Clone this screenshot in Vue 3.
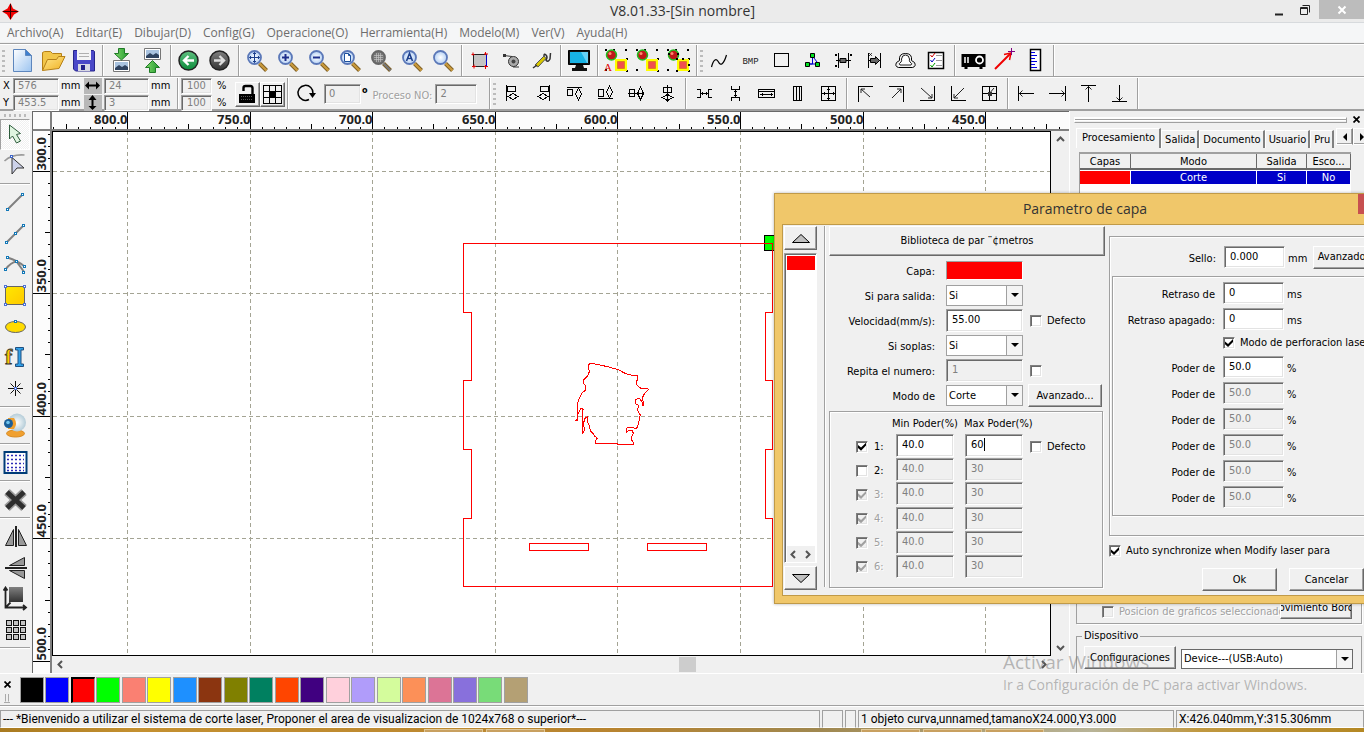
<script setup>
import { ref, computed, onMounted, onUnmounted } from 'vue'

const menus = ['Archivo(A)', 'Editar(E)', 'Dibujar(D)', 'Config(G)', 'Operacione(O)', 'Herramienta(H)', 'Modelo(M)', 'Ver(V)', 'Ayuda(H)']

const lens = (inner, fill = 'url(#glass)', rim = '#5b78b8', handle = '#c99a3c') =>
  `<path d="M14.5 15.5l7 7" stroke="#7a5a20" stroke-width="4"/><path d="M14.5 15.5l7 7" stroke="${handle}" stroke-width="2.4"/><circle cx="9.500" cy="9.500" r="6.500" fill="${fill}" stroke="${rim}" stroke-width="1.800"/>${inner}`
const pic = (y) =>
  `<path d="M4.500 ${y}.500h16v11h-16z" fill="#fff" stroke="#777"/><path d="M6 ${y + 2}h13v8H6z" fill="#a9c3e0"/><path d="M6 ${y + 8}l4-3 3 2 3-2 3 2v3H6z" fill="#2f4360"/>`
const spots = (extra, mode) =>
  `<g fill="#000"><path d="M1 1h2v2H1zM9 1h2v2H9zM21 1h2v2h-2zM1 21h2v2H1zM22 10h2v2h-2zM22 22h2v2h-2z"/></g><circle cx="7.500" cy="7" r="5" fill="#c01818" stroke="#20c020" stroke-width="1.500"/><circle cx="6" cy="5.500" r="1.500" fill="#ff8a70"/><path d="M11 11h12v12H11z" fill="#ff0"/><path d="M13.500 13.500h7v7h-7z" fill="#f05050" stroke="#e08020"/>${mode ? '<path d="M2 5h2v2H2zM11 5h2v2h-2zM10 10h2v2h-2zM22 16h2v2h-2zM16 10h2v2h-2zM10 22h2v2h-2z"/>' : ''}${extra}`
const line = (d, extra = '') => `<g fill="none" stroke="#000" shape-rendering="crispEdges"><path d="${d}"/>${extra}</g>`
const diag = (d) => `<path d="${d}" fill="none" stroke="#222"/>`
const node = (x, y, c = '#1278b8') => `<rect x="${x - 1}.500" y="${y - 1}.500" width="2" height="2" fill="#fff" stroke="${c}"/>`

const icons = {
  nuevo: '<path d="M3.500 1.500h12l6 6v16h-18z" fill="url(#sheet)" stroke="#5d86bd"/><path d="M15.500 1.500v6h6z" fill="#3c7fd0" stroke="#5d86bd"/>',
  abrir: '<path d="M1.500 22.500v-18l2-1h6l2 2h9v5" fill="#f2c64a" stroke="#b58018"/><path d="M1.500 22.500l5-11h9l2-3h6.500l-6 12z" fill="url(#gold)" stroke="#b58018"/>',
  guardar: '<path d="M1.500 2.500h20l1 1v19.500h-19l-2-2z" fill="#4a48c8" stroke="#26258c"/><path d="M5 2h14v10H5z" fill="#f4f4f4"/><path d="M7 5.500h10M7 8.500h10" stroke="#b0b0b0"/><path d="M6 16h12v7H6z" fill="#d8d8e4"/><path d="M9 17h4v5H9z" fill="#22208a"/>',
  importar: pic(12) + '<path d="M9.500 .500h6v5h4l-7 6.500-7-6.500h4z" fill="url(#leaf)" stroke="#1f7a26"/>',
  exportar: pic(0) + '<path d="M9.500 24.500h6v-5h4l-7-7-7 7h4z" fill="url(#leaf)" stroke="#1f7a26"/>',
  atras: '<circle cx="11.500" cy="12.500" r="9.500" fill="url(#green)" stroke="#222" stroke-width="1.500"/><path d="M17 12.500H7M11.500 8L7 12.500l4.500 4.500" fill="none" stroke="#fff" stroke-width="2.400"/>',
  delante: '<circle cx="11.500" cy="12.500" r="9.500" fill="url(#dark)" stroke="#222" stroke-width="1.500"/><path d="M6 12.500h10M11.500 8l4.500 4.500-4.500 4.500" fill="none" stroke="#ddd" stroke-width="2.400"/>',
  zmover: lens('<path d="M9.500 4.500v10M4.500 9.500h10M8 6l1.500-1.500L11 6M8 13l1.500 1.500L11 13M6 8L4.500 9.500 6 11M13 8l1.500 1.500L13 11" fill="none" stroke="#1c3f8c"/>'),
  zmas: lens('<path d="M9.500 6v7M6 9.500h7" stroke="#1c2f8c" stroke-width="2"/>'),
  zmenos: lens('<path d="M6 9.500h7" stroke="#1c2f8c" stroke-width="2"/>'),
  zpagina: lens('<path d="M6.500 5.500h4l2 2v6h-6zM10.500 5.500v2h2" fill="#fff" stroke="#1c4f9c"/>'),
  ztodo: lens('<path d="M5 7.500h9M5 9.500h9M5 11.500h9M7.500 5v9M9.500 5v9M11.500 5v9" stroke="#ccc" stroke-width=".6"/>', '#777', '#666', '#777'),
  zsel: lens('<path d="M6.500 13l3-7.500 3 7.500M7.500 10.500h4" fill="none" stroke="#1c3f8c" stroke-width="1.600"/>'),
  zver: lens(''),
  marco: '<path d="M5.500 6.500h13v12h-13z" fill="#c4c4c4" stroke="#222"/><path d="M18.500 6.500v12" stroke="#00c"/><path d="M5 4.500v3M3.500 6.500h3M17.500 4v3M16 6h4M6 16.500v4M4 18.500h4M17.500 17v4M16 18.500h4" stroke="#e00000"/>',
  rueda: '<circle cx="14.500" cy="13.500" r="5" fill="#aaa" stroke="#333"/><circle cx="14.500" cy="13.500" r="2" fill="#444"/><path d="M5 7.500l8 1M14 19h6" stroke="#333"/><path d="M4 6h3v3H4z" fill="#333"/>',
  pluma: '<path d="M5 17l9-9 2 2.500-8 8.500z" fill="#d8c800" stroke="#555"/><path d="M3 20l4-3M14 8q0-3 2-1t0 5q2 3 4-1l.500-6" fill="none" stroke="#333" stroke-width="1.500"/>',
  monitor: '<path d="M1.500 2.500h21v14h-21z" fill="#111" stroke="#000"/><path d="M3 4h18v11H3z" fill="#17b2e4"/><path d="M14 4h7v11h-1z" fill="#64d0f4"/><path d="M9 17h7l1 3h3v3H5v-3h3z" fill="#111"/>',
  selA: spots('<text x="0" y="23" font-family="Liberation Serif" font-size="11" fill="#e00000">A</text>', false),
  selB: spots('', false),
  selC: spots('', true),
  curva: '<path d="M4.500 19c2-8 5-9 7-5s5 3 8-7" fill="none" stroke="#000" stroke-width="1.200"/>',
  bmp: '<text x="12.500" y="16" text-anchor="middle" font-family="Liberation Mono" font-size="9" fill="#222">BMP</text>',
  cuadro: line('M5.500 5.500h14v13h-14z'),
  nodos: '<path d="M12.500 8v8h-6M12.500 8l6 8h-12" fill="none" stroke="#0000d0"/><g fill="#00e020" stroke="#000"><path d="M10.500 5.500h4v4h-4zM5.500 14.500h4v4h-4zM15.500 14.500h4v4h-4z"/></g>',
  punto1: line('M7.500 5v15M17.500 5v15M5 12.500h15') + '<path d="M9 10.500h6v4H9z" fill="#666" stroke="#000"/><path d="M4 6h2v2H4zM4 17h2v2H4zM19 6h2v2h-2z"/>',
  punto2: line('M6.500 5v15M18.500 5v15M6 12.500h12') + '<path d="M8.500 10.500h5v-2l4 4-4 4v-2h-5z" fill="#666" stroke="#000"/><path d="M7 5l3 3M10 5L7 8" stroke="#000" stroke-width=".7"/>',
  nube: '<path d="M5.500 19.500q-4-1-2-5l3-2q-1-7 6-7t6 7l3 2q2 4-2 5z" fill="none" stroke="#000"/><path d="M7 17q-2-1 1-3 1-1 .500-3 .500-4 4-4t4 4q-.500 2 .500 3 3 2 1 3z" fill="#fff" stroke="#222"/>',
  lista: '<path d="M4.500 4.500h15v16h-15z" fill="#fff" stroke="#000" stroke-width="1.500"/><path d="M6.500 7l1.500 2 3-4" stroke="#d00000" fill="none"/><path d="M6.500 12l1.500 2 3-4" stroke="#0000c0" fill="none"/><path d="M6.500 17l1.500 2 3-4" stroke="#00a000" fill="none"/><path d="M12 7.500h6M12 12.500h6M12 17.500h6" stroke="#999"/>',
  proyector: '<path d="M.500 6h24v13h-3v2h-3v-2h-12v2h-3v-2h-3z"/><path d="M4 9v6M7 9v6" stroke="#fff" stroke-width="1.500"/><circle cx="18.500" cy="12" r="3.500" fill="none" stroke="#fff" stroke-width="1.800"/>',
  flecha: '<path d="M3 21L18 6" stroke="#f00000" stroke-width="2"/><path d="M12 6.500l7-1.500-1.500 7" fill="none" stroke="#f00000" stroke-width="1.500"/><path d="M19.500 0v7M16 3.500h7" stroke="#800080"/>',
  regla: '<path d="M7.500 1.500h10v21h-10z" fill="#fff" stroke="#000" stroke-width="1.500"/><path d="M8 4.500h4M8 7.500h6M8 10.500h4M8 13.500h6M8 16.500h4M8 19.500h6" stroke="#0000e0" stroke-width="1.200"/>',
  alIzq: line('M6.500 4v16M7.500 5.500h8v5h-8zM8 15.500l5-3 5 3-5 3z'),
  alDer: line('M18.500 4v16M9.500 5.500h8v5h-8zM7 15.500l5-3 5 3-5 3z'),
  alSup: line('M5 6.500h15M5.500 8.500h5v6h-5zM16.500 7l3 6-3 6-3-6z'),
  alInf: line('M5 17.500h15M5.500 8.500h5v7h-5zM16.500 5l3 6-3 6-3-6z'),
  alMedH: line('M4 12.500h16M5.500 8.500h5v7h-5zM16.500 6l3 6.500-3 6-3-6z'),
  alMedV: line('M12.500 4v17M8.500 6.500h8v5h-8zM7 16.500l5.500-3 5.500 3-5.500 3z'),
  espH: line('M5 8.500h3.500v8H5M20 8.500h-3.500v8H20M9 12.500h8M10.500 11v3M14.500 11v3'),
  espV: line('M8.500 5v3.500h8V5M8.500 20v-3.500h8V20M12.500 9v8M11 10.500h3M11 14.500h3'),
  igAncho: line('M4.500 8.500h16v8h-16zM5 10.500h15M6 13.500h13M8 12v3M17 12v3'),
  igAlto: line('M8.500 5.500h8v14h-8zM11.500 6v13M14.500 6v13'),
  igTam: line('M5.500 5.500h14v14h-14zM12.500 5v15M5 12.500h15M11 8h3M11 17h3M8 11v3M17 11v3'),
  escTL: line('M5 5.500h15M5.500 5v16') + diag('M17 16L8 8M8 12V8h4'),
  escTR: line('M5 5.500h15M19.500 5v16') + diag('M8 17l9-9M13 8h4v4'),
  escBR: line('M5 19.500h15M19.500 5v15') + diag('M6 7l11 10M17 13v4h-4'),
  escBL: line('M5 19.500h15M5.500 5v15') + diag('M18 7L8 17M8 13v4h4'),
  escC: line('M5.500 5.500h14v14h-14zM12.500 5v15M5 12.500h15') + diag('M12 13l5-6') + '<path d="M11 11h4v4h-4z" fill="#333"/>',
  iIzq: line('M4.500 5v15M5 12.500h15') + diag('M8.500 9.500l-3 3 3 3'),
  iDer: line('M20.500 5v15M4 12.500h16') + diag('M16.500 9.500l3 3-3 3'),
  iSup: line('M5 4.500h15M12.500 5v16') + diag('M9.500 8.500l3-3 3 3'),
  iInf: line('M5 20.500h15M12.500 4v16') + diag('M9.500 16.500l3 3 3-3'),
  giro: '<path d="M15 18.500a7.500 7.500 0 1 1 4-6" fill="none" stroke="#000" stroke-width="1.500"/><path d="M15 12h7l-3.500 5z"/>',
  candado: '<path d="M17.500 12V6q0-2-2-2h-5q-2 0-2 2v3" fill="none" stroke="#000" stroke-width="2.400"/><path d="M4 12h16v9H4z"/><path d="M6 14.500h11M6 17.500h11" stroke="#555" stroke-dasharray="1 1"/>',
  rejilla: line('M3.500 3.500h18v18h-18zM9.500 3v18M15.500 3v18M3 9.500h18M3 15.500h18') + '<path d="M10 10h5v5h-5z"/>',
  ptr: '<path d="M6.500 3v14l3-3 4 7 4-2-4-6.500 4-1z" fill="#dff5e0" stroke="#2e5c3c"/>',
  editar: '<path d="M1.500 8Q9 1 21.500 2" fill="none" stroke="#999" stroke-width="1.600"/><path d="M9 4.500v16.500l5-6h7z" fill="#cdd2ea" stroke="#333"/>' + node(8, 3, '#3c64c8'),
  recta: '<path d="M4.500 19.500l15-15" stroke="#808080" stroke-width="2"/>' + node(4, 19) + node(19, 4),
  poli: '<path d="M3.500 21.500l17-17" stroke="#808080" stroke-width="2"/>' + node(3, 21) + node(12, 12) + node(20, 4),
  bezier: '<path d="M2.500 17.500q5-7 11-8l8 11M4.500 5.500q10 3 17 9" fill="none" stroke="#808080" stroke-width="2"/>' + node(4, 5) + node(13, 9) + node(21, 14) + node(20, 20) + node(2, 17),
  rect: '<path d="M2.500 3.500h19v18h-19z" fill="url(#amber)" stroke="#666"/>' + node(2, 3, '#4c70d8') + node(21, 3, '#4c70d8') + node(2, 21, '#4c70d8') + node(21, 21, '#4c70d8'),
  elipse: '<ellipse cx="12.500" cy="13" rx="10" ry="5.500" fill="#ffdc00" stroke="#666"/>' + node(12, 7, '#1278b8'),
  texto: '<text x="2" y="19" font-family="Liberation Serif" font-weight="bold" font-size="22" fill="#ffc800" stroke="#333" stroke-width=".8">f</text><path d="M12.500 2.500h8v2.500h-2.500v14h2.500v2.500h-8v-2.500h2.500v-14h-2.500z" fill="#30a0e8" stroke="#205080"/>',
  punto: '<path d="M12.500 5v15M5 12.500h15M7.500 7.500l10 10M17.500 7.500l-10 10" stroke="#111"/>' + node(12, 12, '#4c70d8'),
  camara: '<ellipse cx="12.500" cy="20.500" rx="9" ry="3.500" fill="#f0a030" stroke="#d88a20"/><circle cx="14" cy="9.500" r="9" fill="url(#ball)"/><path d="M5 5h6q4 5.500 0 11H5z" fill="#f0a030"/><circle cx="5.500" cy="10.500" r="4.500" fill="#1b5f98"/><circle cx="5" cy="9.500" r="1.800" fill="#6fc4ee"/>',
  puntos: '<path d="M1.500 2h22v21h-22z" fill="#fff" stroke="#003c78" stroke-width="2"/><g stroke="#2c2cb8" stroke-width="1.600" stroke-dasharray="2 2"><path d="M4 5.500h17M4 9.500h17M4 13.500h17M4 17.500h17M4 20.500h17"/></g>',
  cruz: '<path d="M4 5l17 16M21 5L4 21" stroke="#999" stroke-width="8"/><path d="M4 5l17 16M21 5L4 21" stroke="#2e2e2e" stroke-width="5"/>',
  espejoH: '<path d="M10.500 5.500v16h-8zM15.500 5.500v16h8z" fill="#999" stroke="#222"/><path d="M13 2v21" stroke="#222" stroke-width="2"/>',
  espejoV: '<path d="M21.500 10.500v-8l-15 8zM21.500 15.500v8l-15-8z" fill="#999" stroke="#222"/><path d="M2 13h22" stroke="#222" stroke-width="2"/>',
  origen: '<path d="M6 1h14v15H6z" fill="url(#dark)"/><path d="M2.500 2v19.500h20M.500 4.500l2-3 2 3M20 19l3 2.500-3 2.500M2.500 21.500l5-5" fill="none" stroke="#222" stroke-width="1.800"/>',
  matriz: '<g fill="#c4c4c4" stroke="#111" shape-rendering="crispEdges"><path d="M3.500 3.500h5v5h-5zM10.500 3.500h5v5h-5zM17.500 3.500h5v5h-5zM3.500 10.500h5v5h-5zM10.500 10.500h5v5h-5zM17.500 10.500h5v5h-5zM3.500 17.500h5v5h-5zM10.500 17.500h5v5h-5zM17.500 17.500h5v5h-5z"/></g>'
}

const mainTools = [
  { grip: true, items: ['nuevo', 'abrir', 'guardar'] },
  { items: ['importar', 'exportar'] },
  { items: ['atras', 'delante'] },
  { items: ['zmover', 'zmas', 'zmenos', 'zpagina', 'ztodo', 'zsel', 'zver'] },
  { items: ['marco', 'rueda', 'pluma'] },
  { items: ['monitor'] },
  { items: ['selA', 'selB', 'selC'] },
  { grip: true, items: ['curva', 'bmp', 'cuadro', 'nodos', 'punto1', 'punto2', 'nube', 'lista'] },
  { items: ['proyector', 'flecha', 'regla'] }
]
const alignTools = [
  { grip: true, items: ['alIzq', 'alDer', 'alSup', 'alInf', 'alMedH', 'alMedV'] },
  { items: ['espH', 'espV', 'igAncho', 'igAlto', 'igTam'] },
  { items: ['escTL', 'escTR', 'escBR', 'escBL', 'escC'] },
  { items: ['iIzq', 'iDer', 'iSup', 'iInf'] }
]
const sideTools = [
  ['ptr', 'editar'],
  ['recta', 'poli', 'bezier', 'rect', 'elipse', 'texto', 'punto'],
  ['camara'],
  ['puntos'],
  ['cruz'],
  ['espejoH', 'espejoV', 'origen', 'matriz']
]

// Rulers: ten divisions for every 50 mm, as far as the window shows them.
const STEP = 12.26
const size = ref({ w: window.innerWidth, h: window.innerHeight })
const measure = () => { size.value = { w: window.innerWidth, h: window.innerHeight } }
onMounted(() => window.addEventListener('resize', measure))
onUnmounted(() => window.removeEventListener('resize', measure))

const scale = (origin, first, end) => {
  const out = []
  for (let k = first; origin + k * STEP < end; k++) {
    out.push({ k, pos: Math.floor(origin + k * STEP) + 0.5, len: k % 10 === 0 ? 18 : k % 5 === 0 ? 6 : 3 })
  }
  return out
}
const majors = (list, label) => list.filter((t) => t.k >= 0 && t.k % 10 === 0).map((t) => ({ pos: t.pos, label: label(t.k * 5).toFixed(1) }))
const hTicks = computed(() => scale(127.4, -6, size.value.w - 296))
const vTicks = computed(() => scale(171, -3, size.value.h - 59))
const hMajors = computed(() => majors(hTicks.value, (d) => 800 - d))
const vMajors = computed(() => majors(vTicks.value, (d) => 300 + d))

const tabs = ['Procesamiento', 'Salida', 'Documento', 'Usuario', 'Pru']
const colors = ['#000000', '#0000ff', '#ff0000', '#00ff00', '#fa8072', '#ffff00', '#1e90ff', '#8b3510', '#808000', '#008060', '#ff4500', '#400080', '#ffd0dc', '#b09cfa', '#d4fc9c', '#fc9058', '#dc7496', '#8870dc', '#78dc78', '#b4a074']

const power = ref([
  { on: true, min: '40.0', max: '60', state: 'active' },
  { on: false, min: '40.0', max: '30', state: 'idle' },
  { on: true, min: '40.0', max: '30', state: 'off' },
  { on: true, min: '40.0', max: '30', state: 'off' },
  { on: true, min: '40.0', max: '30', state: 'off' },
  { on: true, min: '40.0', max: '30', state: 'off' }
])
const piercing = ref(['50.0', '50.0', '50.0', '50.0', '50.0', '50.0'])
</script>

<template>
  <div class="app">
    <svg class="defs" aria-hidden="true">
      <defs>
        <linearGradient id="sheet" x1="0" y1="0" x2="1" y2="1"><stop offset="0" stop-color="#fff" /><stop offset="1" stop-color="#9cc4f0" /></linearGradient>
        <linearGradient id="gold" x1="0" y1="0" x2="1" y2="1"><stop offset="0" stop-color="#ffe890" /><stop offset="1" stop-color="#f0b020" /></linearGradient>
        <linearGradient id="amber" x1="0" y1="0" x2="1" y2="1"><stop offset="0" stop-color="#ffe800" /><stop offset="1" stop-color="#ffc800" /></linearGradient>
        <linearGradient id="leaf" x1="0" y1="0" x2="1" y2="0"><stop offset="0" stop-color="#7ed868" /><stop offset="1" stop-color="#239a30" /></linearGradient>
        <linearGradient id="green" x1="0" y1="0" x2="0" y2="1"><stop offset="0" stop-color="#60c080" /><stop offset="1" stop-color="#0c8c3c" /></linearGradient>
        <linearGradient id="dark" x1="0" y1="0" x2="0" y2="1"><stop offset="0" stop-color="#808080" /><stop offset="1" stop-color="#333" /></linearGradient>
        <radialGradient id="glass"><stop offset="0" stop-color="#fff" /><stop offset="1" stop-color="#b4d0f4" /></radialGradient>
        <radialGradient id="ball"><stop offset="0" stop-color="#fff" /><stop offset="1" stop-color="#b4ccd8" /></radialGradient>
      </defs>
    </svg>

    <header class="title">
      <svg class="logo" width="17" height="17" viewBox="0 0 17 17"><path d="M8.500 0l2.500 5.500L17 8.500l-5 3-3.500 5.500-3.500-5.500-5-3 5.500-3z" fill="#f00000" /><path d="M8.500 1v15M1 8.500h15" stroke="#300" stroke-width="1" /></svg>
      <h1>V8.01.33-[Sin nombre]</h1>
      <div class="winbtns">
        <button aria-label="Minimizar"><svg width="12" height="14"><path d="M2 11.500h8" stroke="#222" stroke-width="2" /></svg></button>
        <button aria-label="Restaurar"><svg width="12" height="12" fill="none" stroke="#222"><path d="M1.500 3.500h7v7h-7zM1 4.500h8M3.500 1.500h7v7" /></svg></button>
        <button class="close" aria-label="Cerrar"><svg width="10" height="10"><path d="M1.500 1.500l7 7M8.500 1.500l-7 7" stroke="#fff" stroke-width="2" /></svg></button>
      </div>
    </header>

    <nav class="menu"><button v-for="m in menus" :key="m">{{ m }}</button></nav>

    <div class="bar">
      <div v-for="(g, i) in mainTools" :key="i" class="group">
        <i v-if="g.grip" class="grip"></i>
        <button v-for="n in g.items" :key="n" class="tool" :aria-label="n"><svg width="25" height="25" viewBox="0 0 25 25" v-html="icons[n]"></svg></button>
      </div>
    </div>

    <div class="bar second">
      <div class="group coords">
        <div class="xy">
          <label for="px">X</label><input id="px" value="576" /><span>mm</span>
          <button aria-label="Ancho"><svg width="17" height="15"><path d="M4 7.500h9" stroke="#000" stroke-width="2" /><path d="M1 7.500l4-4v8zM16 7.500l-4-4v8z" /></svg></button>
          <input aria-label="Ancho" value="24" /><span>mm</span>
          <label for="py">Y</label><input id="py" value="453.5" /><span>mm</span>
          <button aria-label="Alto"><svg width="17" height="15"><path d="M8.500 4v8" stroke="#000" stroke-width="2" /><path d="M8.500 0l4 5h-8zM8.500 15l4-4h-8z" /></svg></button>
          <input aria-label="Alto" value="3" /><span>mm</span>
        </div>
      </div>
      <div class="group scale">
        <div class="pct">
          <input aria-label="Escala X" value="100" /><span>%</span>
          <input aria-label="Escala Y" value="100" /><span>%</span>
        </div>
        <button class="raised sq" aria-label="Bloquear"><svg width="25" height="25" viewBox="0 0 25 25" v-html="icons.candado"></svg></button>
        <button class="raised sq" aria-label="Origen"><svg width="25" height="25" viewBox="0 0 25 25" v-html="icons.rejilla"></svg></button>
      </div>
      <div class="group rot">
        <svg width="25" height="25" viewBox="0 0 25 25" v-html="icons.giro"></svg>
        <input aria-label="Rotar" class="deg" value="0" /><span class="o">o</span>
        <label for="proc" class="etched">Proceso NO:</label><input id="proc" class="proc" value="2" />
      </div>
      <div v-for="(g, i) in alignTools" :key="i" class="group">
        <i v-if="g.grip" class="grip"></i>
        <button v-for="n in g.items" :key="n" class="tool" :aria-label="n"><svg width="25" height="25" viewBox="0 0 25 25" v-html="icons[n]"></svg></button>
      </div>
    </div>

    <main>
      <aside class="toolbox">
        <i class="hgrip"></i>
        <div v-for="(g, i) in sideTools" :key="i" class="stack">
          <button v-for="n in g" :key="n" class="tool" :class="{ picked: n === 'ptr' }" :aria-label="n"><svg width="25" height="25" viewBox="0 0 25 25" v-html="icons[n]"></svg></button>
        </div>
      </aside>

      <section class="work">
        <div class="corner"></div>
        <svg class="hruler" shape-rendering="crispEdges">
          <g transform="translate(-52 0)">
            <path v-for="t in hTicks" :key="t.pos" :d="`M${t.pos} ${18 - t.len}v${t.len}`" stroke="#000" />
            <text v-for="m in hMajors" :key="m.label" :x="m.pos" y="12" text-anchor="end">{{ m.label }}</text>
          </g>
        </svg>
        <svg class="vruler" shape-rendering="crispEdges">
          <g transform="translate(0 -131)">
            <path v-for="t in vTicks" :key="t.pos" :d="`M${18 - t.len} ${t.pos}h${t.len}`" stroke="#000" />
            <text v-for="m in vMajors" :key="m.label" :transform="`translate(13 ${m.pos - 1}) rotate(-90)`">{{ m.label }}</text>
          </g>
        </svg>
        <svg class="canvas" shape-rendering="crispEdges">
          <g transform="translate(-53 -132)">
            <g stroke="#a4a494" stroke-dasharray="4 3">
              <path v-for="m in hMajors" :key="m.label" :d="`M${m.pos} 131V1400`" />
              <path v-for="m in vMajors" :key="m.label" :d="`M53 ${m.pos}H2000`" />
            </g>
            <rect x="764.5" y="235.5" width="16" height="15" fill="#00ff00" stroke="#000" />
            <g fill="none" stroke="#ff0000">
              <path d="M463.500 243.500h309v69h-7v68h7v69h-7v69h7v68h-309v-68h8v-69h-8v-69h8v-68h-8z" />
              <path d="M529.500 543.500h59v7h-59zM647.500 543.500h59v7h-59z" />
              <path transform="translate(450 230) scale(.33333)" vector-effect="non-scaling-stroke" d="M420 401L436 402 455 406 480 412 505 419 525 430 545 436 563 437 563 449 560 453 560 464 572 475 590 475 596 479 585 488 579 500 579 514 582 528 577 528 577 517 570 507 564 505 558 508 556 521 565 525 563 542 571 555 567 572 563 590 557 596 550 593 534 592 529 595 529 607 536 602 547 602 550 610 545 620 545 630 552 640 550 643 503 643 503 640 437 640 437 633 442 624 434 619 430 611 421 602 418 587 412 575 412 560 405 565 401 578 403 602 398 609 397 540 401 540 399 536 392 536 388 543 383 555 382 571 379 571 382 568 382 525 386 508 397 488 405 482 407 469 401 460 401 449 412 439 418 425 415 405z" />
            </g>
          </g>
        </svg>
        <div class="vscroll">
          <svg width="9" height="6"><path d="M1 5l3.500-3.500L8 5" /></svg>
          <svg width="9" height="6"><path d="M1 1l3.500 3.500L8 1" /></svg>
        </div>
        <div class="hscroll">
          <svg width="6" height="9"><path d="M5 1L1.500 4.500 5 8" /></svg>
          <i></i>
          <svg width="6" height="9"><path d="M1 1l3.500 3.500L1 8" /></svg>
        </div>
      </section>

      <aside class="panel">
        <div class="handle"><i></i><button aria-label="Cerrar panel"><svg width="7" height="7"><path d="M.500 .500l6 6M6.500 .500l-6 6" stroke="#000" stroke-width="1.700" /></svg></button></div>
        <div class="tabs">
          <button v-for="(t, i) in tabs" :key="t" :class="{ on: i === 0 }">{{ t }}</button>
          <div class="arrows"><button class="raised" aria-label="Anterior"><svg width="5" height="8"><path d="M5 0v8L1 4z" /></svg></button><button class="raised" aria-label="Siguiente"><svg width="5" height="8"><path d="M1 0v8l4-4z" /></svg></button></div>
        </div>
        <div class="layers">
          <table>
            <thead><tr><th class="c1">Capas</th><th>Modo</th><th class="c3">Salida</th><th class="c4">Esco...</th></tr></thead>
            <tbody><tr><td class="red"></td><td>Corte</td><td>Si</td><td>No</td></tr></tbody>
          </table>
        </div>
        <div class="pos">
          <label class="etched"><input type="checkbox" disabled /><span>Posicion de graficos seleccionadc</span></label>
          <button class="raised">ovimiento Borc</button>
        </div>
        <fieldset>
          <legend>Dispositivo</legend>
          <button class="raised">Configuraciones</button>
          <div class="pick deep"><select aria-label="Dispositivo"><option>Device---(USB:Auto)</option></select></div>
        </fieldset>
      </aside>
    </main>

    <div class="palette">
      <div class="mini"><svg width="7" height="7"><path d="M.500 .500l6 6M6.500 .500l-6 6" stroke="#000" stroke-width="1.700" /></svg><svg width="7" height="9"><path d="M1.500 0v7.500M4.500 0v7.500M0 8.500h6" stroke="#aaa" /></svg></div>
      <div class="swatches"><button v-for="(c, i) in colors" :key="c" :class="{ on: i === 2 }" :style="{ background: c }" :aria-label="c"></button></div>
    </div>

    <footer class="status">
      <span class="grow">--- *Bienvenido a utilizar el sistema de corte laser, Proponer el area de visualizacion de 1024x768 o superior*---</span>
      <span class="s20"></span><span class="s10"></span>
      <span class="obj">1 objeto curva,unnamed,tamanoX24.000,Y3.000</span>
      <span class="cur">X:426.040mm,Y:315.306mm</span>
    </footer>
    <div class="taskbar"><i></i><i></i><b></b><i></i><i></i><i></i></div>

    <div class="watermark"><p class="big">Activar Windows</p><p>Ir a Configuración de PC para activar Windows.</p></div>

    <div class="dialog" role="dialog" aria-labelledby="dlg">
      <div class="dtitle"><h2 id="dlg">Parametro de capa</h2><button aria-label="Cerrar"></button></div>
      <div class="dbody">
        <div class="layerlist">
          <button class="raised" aria-label="Subir"><svg width="20" height="11"><path d="M1.500 9.500h17L10 1.500z" fill="#c0c0c0" stroke="#000" /></svg></button>
          <div class="list"><i></i><div><svg width="6" height="9"><path d="M5 1L1.500 4.500 5 8" /></svg><svg width="6" height="9"><path d="M1 1l3.500 3.500L1 8" /></svg></div></div>
          <button class="raised" aria-label="Bajar"><svg width="20" height="11"><path d="M1.500 1.500h17L10 9.500z" fill="#c0c0c0" stroke="#000" /></svg></button>
        </div>

        <div class="mid">
          <button class="raised lib">Biblioteca de par ¨¢metros</button>
          <div class="form">
            <label for="capa">Capa:</label><button id="capa" class="capa" aria-label="Capa"></button><span></span>
            <label for="sal">Si para salida:</label><div class="pick"><select id="sal"><option>Si</option></select></div><span></span>
            <label for="vel">Velocidad(mm/s):</label><input id="vel" class="field" value="55.00" /><label class="chk"><input type="checkbox" />Defecto</label>
            <label for="sop">Si soplas:</label><div class="pick"><select id="sop"><option>Si</option></select></div><span></span>
            <label for="rep">Repita el numero:</label><input id="rep" class="field" value="1" disabled /><label class="chk"><input type="checkbox" aria-label="Repetir" /></label>
            <label for="mod">Modo de</label><div class="pick"><select id="mod"><option>Corte</option></select></div><button class="raised adv">Avanzado...</button>
          </div>
          <div class="etch power">
            <div class="phead"><span>Min Poder(%)</span><span>Max Poder(%)</span></div>
            <div v-for="(p, i) in power" :key="i" class="prow">
              <label :class="{ etched: p.state === 'off' }"><input v-model="p.on" type="checkbox" :disabled="p.state === 'off'" />{{ i + 1 }}:</label>
              <input v-model="p.min" class="field" :aria-label="`Min ${i + 1}`" :disabled="p.state !== 'active'" />
              <div class="max"><input v-model="p.max" class="field" :aria-label="`Max ${i + 1}`" :disabled="p.state !== 'active'" /><i v-if="i === 0"></i></div>
              <label v-if="i === 0" class="chk"><input type="checkbox" />Defecto</label>
            </div>
          </div>
        </div>

        <div class="right">
          <div class="etch outer">
            <div class="row seal"><label for="sello">Sello:</label><input id="sello" class="field" value="0.000" /><span>mm</span><button class="raised">Avanzado...</button></div>
            <div class="etch inner">
              <div class="row"><label for="r1">Retraso de</label><input id="r1" class="field" value="0" /><span>ms</span></div>
              <div class="row"><label for="r2">Retraso apagado:</label><input id="r2" class="field" value="0" /><span>ms</span></div>
              <label class="perf"><input type="checkbox" checked />Modo de perforacion lase</label>
              <div v-for="(p, i) in piercing" :key="i" class="row"><label :for="`pd${i}`">Poder de</label><input :id="`pd${i}`" class="field" :value="p" :disabled="i > 0" /><span>%</span></div>
            </div>
          </div>
          <label class="sync"><input type="checkbox" checked />Auto synchronize when Modify laser para</label>
          <div class="actions"><button class="raised">Ok</button><button class="raised">Cancelar</button></div>
        </div>
      </div>
    </div>
  </div>
</template>

<style>
body { margin: 0; }
</style>

<style scoped>
* { box-sizing: border-box; }
.app { --ui: "DejaVu Sans Condensed", "Open Sans", sans-serif; --seg: "Open Sans", "Noto Sans", sans-serif; position: relative; display: flex; flex-direction: column; height: 100vh; overflow: hidden; background: #f0f0f0; color: #000; font: 11px/14px var(--ui); }
button, input, select { font: inherit; color: inherit; margin: 0; padding: 0; border-radius: 0; }
button { border: 0; background: none; }
p, h1, h2 { margin: 0; font-weight: normal; }
svg { flex: none; display: block; }
.defs { position: absolute; width: 0; height: 0; }

.raised { background: #f0f0f0; border: 1px solid; border-color: #fff #696969 #696969 #fff; box-shadow: inset -1px -1px #a0a0a0; display: flex; align-items: center; justify-content: center; white-space: nowrap; }
.etched, .etched input { color: #a0a0a0; text-shadow: 1px 1px #fff; }
.field, .xy input, .pct input, .rot input { background: #fff; border: 1px solid; border-color: #a0a0a0 #fff #fff #a0a0a0; box-shadow: inset 1px 1px #696969, inset -1px -1px #e3e3e3; min-width: 0; }
.field { height: 23px; padding: 0 5px 2px; }
.field:disabled { background: #f0f0f0; color: #808080; }

.title { flex: none; display: flex; align-items: center; height: 23px; background: #ebebeb; border-bottom: 1px solid #d7dadd; padding-left: 2px; }
.title h1 { flex: 1; text-align: center; font: 14px/22px var(--seg); color: #333; padding-left: 80px; }
.winbtns { display: flex; align-self: flex-start; height: 19px; }
.winbtns button { width: 26px; display: flex; align-items: center; justify-content: center; }
.winbtns .close { width: 45px; background: #bcbcbc; margin-left: 1px; }

.menu { flex: none; display: flex; gap: 12px; height: 20px; padding-left: 7px; background: #f5f6f7; border-bottom: 1px solid #efefef; }
.menu button { font: 12px/20px var(--seg); color: #6d6d6d; }

.bar { flex: none; display: flex; height: 33px; border-top: 1px solid #a0a0a0; box-shadow: inset 0 1px #fff; padding-top: 1px; }
.second { height: 35px; border-bottom: 2px solid #a0a0a0; }
.group { display: flex; align-items: center; padding: 0 2px; border-right: 1px solid #a0a0a0; box-shadow: 1px 0 #fff; margin-right: 1px; height: 31px; }
.tool { width: 31px; height: 31px; display: flex; align-items: center; justify-content: center; }
.grip { width: 3px; height: 22px; margin: 0 2px 0 0; background: repeating-linear-gradient(#bbb 0 2px, transparent 2px 5px); }
.bar .group + .group .grip { margin: 0 1px 0 0; }

.coords { width: 178px; padding: 1px 0 0 3px; }
.xy { display: grid; grid-template-columns: 10px 46px 25px 20px 45px 22px; grid-auto-rows: 16px; align-items: center; row-gap: 1px; }
.xy span { padding-left: 2px; }
.xy button { width: 18px; height: 16px; background: #b8b8b8; }
.xy input, .pct input { width: 100%; height: 16px; background: #f0f0f0; color: #808080; padding: 0 4px; }
.pct input { padding: 0 5px; }
.scale { width: 109px; padding-top: 1px; }
.pct { display: grid; grid-template-columns: 31px 23px; grid-auto-rows: 16px; row-gap: 1px; align-items: center; }
.pct span { padding-left: 5px; }
.sq { width: 25px; height: 25px; }
.rot { width: 201px; padding-left: 5px; }
.rot input { background: #f0f0f0; height: 20px; color: #808080; padding: 0 4px; }
.rot .deg { width: 37px; margin-left: 5px; }
.rot .proc { width: 42px; margin-left: 3px; }
.rot .o { font: bold 9px/12px var(--ui); margin: 0 5px 8px 1px; }
.rot .etched { padding-top: 4px; white-space: nowrap; }

main { flex: 1; min-height: 0; display: flex; }
.toolbox { width: 32px; flex: none; overflow: hidden; }
.hgrip { display: block; width: 23px; height: 3px; margin: 3px 4px 2px; background: repeating-linear-gradient(90deg, #bbb 0 2px, transparent 2px 5px); }
.stack { padding-bottom: 2px; border-bottom: 1px solid #a0a0a0; box-shadow: 0 1px #fff; margin: 0 2px 3px 0; }
.stack .tool { width: 30px; padding-left: 1px; }
.picked { background: repeating-conic-gradient(#fff 0 25%, #f0f0f0 0 50%) 0 0 / 2px 2px; border: 1px solid; border-color: #a0a0a0 #fff #fff #a0a0a0; }

.work { flex: 1; min-width: 0; display: grid; grid-template: 20px minmax(0, 1fr) 17px / 20px minmax(0, 1fr) 18px; }
.corner { background: #fcfcfc; border: 1px solid #696969; border-right: 2px solid #808080; border-bottom: 2px solid #808080; }
.hruler { grid-column: 2 / 4; width: 100%; height: 20px; background: #fcfcfc; border-top: 1px solid #696969; border-bottom: 2px solid #808080; }
.vruler { grid-row: 2 / 4; width: 20px; height: 100%; background: #fcfcfc; border-left: 1px solid #696969; border-right: 2px solid #808080; }
.hruler text, .vruler text { font: bold 13px "Noto Sans", sans-serif; fill: #222; }
.canvas { width: 100%; height: 100%; background: #fff; border: 1px solid #000; }
.vscroll { display: flex; flex-direction: column; justify-content: space-between; align-items: center; padding: 5px 0; }
.hscroll { grid-column: 2 / 4; display: flex; align-items: center; justify-content: space-between; padding: 0 22px 0 5px; }
.hscroll i { width: 17px; height: 15px; background: #cdcdcd; margin-left: 270px; }
.vscroll svg, .hscroll svg, .list svg { fill: none; stroke: #555; stroke-width: 2; }

.panel { width: 295px; flex: none; border-left: 1px solid #fff; display: flex; flex-direction: column; overflow: hidden; padding-left: 4px; }
.handle { flex: none; height: 17px; display: flex; align-items: center; }
.handle i { flex: 1; height: 6px; border: 1px solid; border-color: #fff #a0a0a0 #a0a0a0 #fff; background: linear-gradient(#fff 0 1px, #a0a0a0 1px 2px, #fff 2px 3px, #f0f0f0 3px); }
.handle button { margin: 0 4px 0 6px; }
.tabs { flex: none; display: flex; align-items: flex-end; height: 20px; margin-left: 2px; position: relative; }
.tabs button { border: solid; border-width: 1px 2px 0 1px; border-color: #fff #808080 #fff #fff; }
.tabs > button { height: 18px; padding: 0 2px 0 3px; }
.tabs > .on { height: 20px; padding: 0 4px 2px 5px; }
.arrows { position: absolute; right: -6px; top: 0; display: flex; }
.arrows button { width: 17px; height: 17px; background: #f0f0f0; border-width: 1px; }
.layers { flex: 1; min-height: 0; margin: 4px 13px 0 5px; background: #fff; border: 1px solid #a0a0a0; border-width: 2px 0 0 1px; }
table { width: 100%; border-spacing: 0; table-layout: fixed; line-height: 13px; }
th { font-weight: normal; height: 16px; padding: 0; background: #f0f0f0; border-right: 1px solid #696969; border-bottom: 2px solid #696969; white-space: nowrap; }
td { height: 14px; padding: 0; background: #0000c8; color: #fff; text-align: center; border: 1px solid #fff; border-width: 1px 1px 0 0; }
.red { background: #f00; }
.c1 { width: 51px; } .c3 { width: 50px; } .c4 { width: 44px; }
.pos { flex: none; display: flex; align-items: flex-end; height: 31px; margin: 0 2px 0 2px; border: 1px solid #a0a0a0; border-top: 0; box-shadow: 1px 1px #fff; padding: 0 9px 4px 25px; }
.pos label { display: flex; align-items: center; gap: 5px; width: 178px; overflow: hidden; white-space: nowrap; }
.pos button { width: 72px; height: 25px; padding-top: 3px; overflow: hidden; }
fieldset { flex: none; display: flex; gap: 5px; min-width: 0; height: 44px; margin: 5px 2px 0 2px; padding: 3px 8px 0 7px; border: 1px solid #a0a0a0; border-bottom: 0; }
legend { padding: 0 2px; margin-left: -2px; }
fieldset .raised { width: 92px; height: 23px; }

.pick { position: relative; background: #fff; border: 1px solid #a0a0a0; height: 21px; }
.pick::after { content: ""; position: absolute; right: 3px; top: 7px; border: solid transparent; border-width: 4px 4px 0; border-top-color: #000; pointer-events: none; }
.pick::before { content: ""; position: absolute; right: 0; top: 0; bottom: 0; width: 15px; background: #f4f4f4; border-left: 1px solid #a0a0a0; pointer-events: none; }
.pick select { position: relative; width: 100%; height: 100%; border: 0; background: none; appearance: none; padding-left: 2px; display: block; }
.deep { flex: 1; border-color: #696969; margin-top: 3px; height: 20px; }

input[type="checkbox"] { appearance: none; flex: none; width: 12px; height: 12px; background: #fff; border: 1px solid; border-color: #808080 #fff #fff #808080; box-shadow: inset 1px 1px #696969, inset -1px -1px #e3e3e3; }
input[type="checkbox"]:checked::after { content: ""; display: block; width: 8px; height: 8px; margin: 1px; background: #000; clip-path: polygon(0 30%, 38% 62%, 100% 0, 100% 36%, 38% 100%, 0 66%); }
input[type="checkbox"]:disabled { background: #f0f0f0; }
input[type="checkbox"]:disabled::after { background: #a0a0a0; }

.palette { flex: none; display: flex; height: 33px; border-top: 1px solid #fff; border-bottom: 1px solid #a0a0a0; padding: 3px 0 0 4px; }
.mini { width: 16px; display: flex; flex-direction: column; gap: 6px; padding-top: 4px; }
.swatches { display: flex; justify-content: space-between; width: 508px; }
.swatches button { width: 24px; height: 26px; border: 1px solid #a0a0a0; }
.swatches .on { border: solid; border-color: #000 #a0a0a0 #a0a0a0 #000; border-width: 2px 1px 1px 2px; }

.status { flex: none; display: flex; gap: 2px; height: 22px; padding-top: 3px; border-top: 1px solid #fff; font: 12px/14px Roboto, sans-serif; }
.status span { border: 1px solid #a0a0a0; border-bottom-color: #fff; padding-left: 2px; white-space: nowrap; overflow: hidden; line-height: 17px; }
.status .grow { flex: 1; min-width: 0; }
.s20 { width: 21px; } .s10 { width: 11px; } .obj { width: 316px; } .cur { width: 188px; }
.taskbar { flex: none; display: flex; gap: 3px; height: 4px; padding: 1px 0 0 424px; background: linear-gradient(90deg, #a87a20, #c49030 10%, #b88430 45%, #a08850 60%, #b8b498 80%, #c09840 88%, #b48824); }
.taskbar i { width: 59px; background: #c8a060; border: 1px solid #e0c898; border-bottom: 0; }
.taskbar b { width: 310px; }

.watermark { position: absolute; left: 1003px; bottom: 36px; color: rgba(120, 120, 120, .5); font: 14px/22px var(--seg); pointer-events: none; white-space: nowrap; }
.watermark .big { font-size: 19px; line-height: 24px; }

.dialog { position: absolute; left: 774px; top: 193px; width: 622px; height: 411px; background: #f0c76a; border: 1px solid #c09a48; padding: 0 7px 7px; display: flex; flex-direction: column; box-shadow: 0 0 3px rgba(0, 0, 0, .3); }
.dtitle { flex: none; height: 30px; position: relative; }
.dtitle h2 { text-align: center; font: 14px/30px var(--seg); color: #333; }
.dtitle button { position: absolute; right: 0; top: 0; width: 30px; height: 20px; background: #c75050; }
.dbody { flex: 1; min-height: 0; display: flex; background: #f0f0f0; border: 1px solid #c09a48; padding: 1px 0 0 1px; }
.layerlist { width: 33px; display: flex; flex-direction: column; gap: 3px; padding-bottom: 5px; }
.layerlist button { height: 24px; }
.list { flex: 1; background: #fff; border: 1px solid; border-color: #a0a0a0 #fff #fff #a0a0a0; box-shadow: inset 1px 1px #696969; padding: 2px 1px 0 2px; display: flex; flex-direction: column; justify-content: space-between; }
.list i { height: 14px; background: #f00; }
.list div { display: flex; justify-content: space-between; align-items: center; height: 16px; background: #f0f0f0; padding: 0 4px 0 3px; }
.mid { width: 281px; margin: 0 0 8px 7px; border-left: 1px solid #a0a0a0; box-shadow: inset 1px 0 #fff; padding-left: 4px; }
.lib { width: 276px; height: 30px; }
.form { display: grid; grid-template-columns: 106px 77px 1fr; column-gap: 11px; grid-auto-rows: 23px; row-gap: 2px; align-items: center; padding-top: 3px; }
.form > label:not(.chk) { text-align: right; padding-top: 2px; }
.form > .chk { margin-left: -4px; }
.form .adv { margin-left: -6px; }
.chk { display: flex; align-items: center; gap: 5px; }
.capa { height: 19px; background: #f00; border: 1px solid #a0a0a0; border-right-color: #fff; border-bottom-color: #fff; }
.adv { width: 74px; height: 23px; }
.etch { border: 1px solid #a0a0a0; box-shadow: 1px 1px #fff, inset 1px 1px #fff; }
.power { width: 274px; height: 177px; margin-top: 4px; padding: 5px 0 9px 26px; display: flex; flex-direction: column; justify-content: space-between; }
.phead { display: flex; gap: 6px; padding-left: 36px; margin-bottom: 2px; }
.prow { display: flex; align-items: center; }
.prow > label { padding-top: 2px; }
.prow > label:first-child { display: flex; align-items: center; gap: 6px; width: 40px; }
.prow .field { width: 58px; }
.max { position: relative; margin: 0 7px 0 11px; }
.max i { position: absolute; left: 19px; top: 4px; width: 1px; height: 13px; background: #000; }
.right { flex: 1; min-width: 0; padding: 10px 0 0 4px; }
.outer { height: 300px; padding: 9px 0 0 2px; }
.row { display: flex; align-items: center; height: 22px; }
.row label { width: 104px; text-align: right; margin-right: 8px; padding-top: 3px; }
.row .field { width: 61px; height: 22px; }
.row span { padding: 3px 0 0 3px; }
.row button { width: 66px; height: 23px; margin-left: 6px; }
.inner { height: 240px; margin-top: 8px; padding-top: 5px; display: flex; flex-direction: column; gap: 4px; }
.inner .row label { width: 102px; }
.perf, .sync { display: flex; align-items: center; gap: 5px; height: 18px; white-space: nowrap; }
.perf { padding-left: 110px; }
.sync { margin-top: 6px; }
.actions { display: flex; gap: 12px; padding: 8px 0 0 93px; }
.actions button { width: 75px; height: 23px; }
</style>
